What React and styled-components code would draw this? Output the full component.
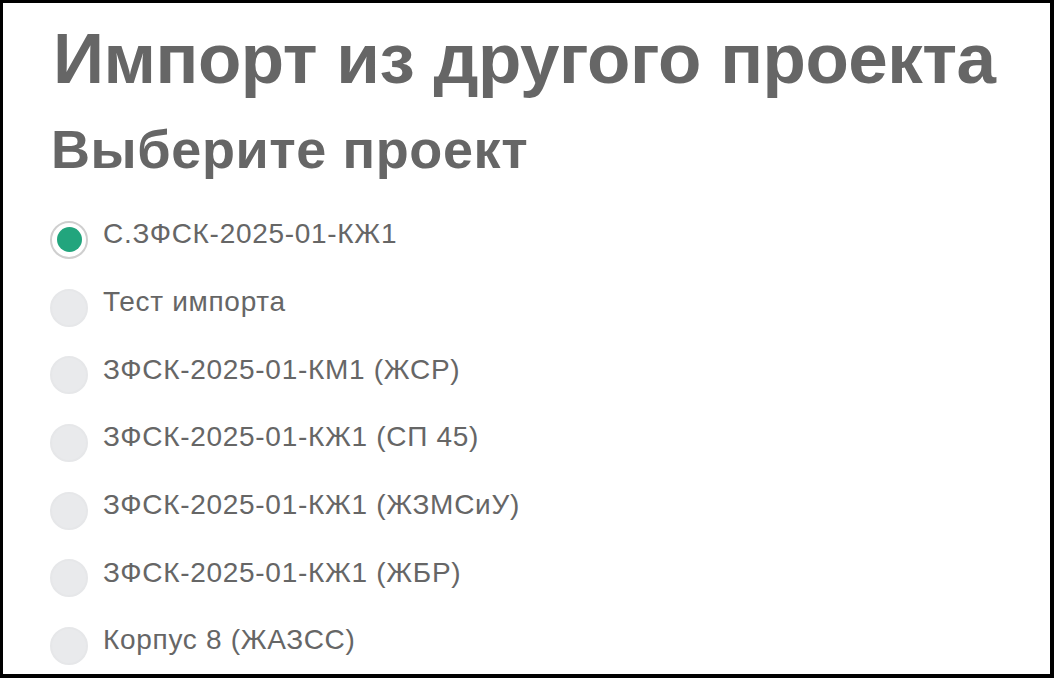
import React, { useState } from 'react'
import styled, { createGlobalStyle } from 'styled-components'

const GlobalStyle = createGlobalStyle`
    html, body {
        margin: 0;
        padding: 0;
        background: #000;
    }
    * {
        box-sizing: border-box;
    }
`;

const projects = [
    'С.ЗФСК-2025-01-КЖ1',
    'Тест импорта',
    'ЗФСК-2025-01-КМ1 (ЖСР)',
    'ЗФСК-2025-01-КЖ1 (СП 45)',
    'ЗФСК-2025-01-КЖ1 (ЖЗМСиУ)',
    'ЗФСК-2025-01-КЖ1 (ЖБР)',
    'Корпус 8 (ЖАЗСС)',
];

function App() {
    const [selected, setSelected] = useState(0);

    return (
        <Frame>
            <GlobalStyle />
            <Title>Импорт из другого проекта</Title>
            <Subtitle>Выберите проект</Subtitle>
            <ProjectList>
                {projects.map((name, i) => (
                    <ProjectRow key={name} onClick={() => setSelected(i)}>
                        <Radio $checked={selected === i} />
                        <Label>{name}</Label>
                    </ProjectRow>
                ))}
            </ProjectList>
        </Frame>
    )
}

const Frame = styled.div`
    width: 1054px;
    height: 678px;
    overflow: hidden;
    background: #fff;
    border: 3px solid #000;
    border-right-width: 4px;
    border-bottom-width: 4px;
    padding: 20px 0 0 44px;
    font-family: "Liberation Sans", Arial, sans-serif;
    color: #666;
`;

const Title = styled.h1`
    margin: 0 0 0 6px;
    font-size: 71px;
    line-height: 71px;
    font-weight: 700;
    letter-spacing: -0.5px;
    color: #666;
    white-space: nowrap;
`;

const Subtitle = styled.h2`
    margin: 28px 0 0 4px;
    font-size: 54px;
    line-height: 54px;
    font-weight: 700;
    letter-spacing: 0.6px;
    color: #666;
`;

const ProjectList = styled.div`
    margin-top: 30px;
    display: flex;
    flex-direction: column;
`;

const ProjectRow = styled.label`
    height: 67.7px;
    display: flex;
    align-items: center;
    gap: 15px;
    padding-left: 3px;
    cursor: pointer;
`;

const Radio = styled.span`
    width: 38px;
    height: 38px;
    flex-shrink: 0;
    border-radius: 50%;
    display: flex;
    align-items: center;
    justify-content: center;
    background: ${p => (p.$checked ? '#fff' : '#e9eaec')};
    border: 2px solid ${p => (p.$checked ? '#cfcfcf' : '#e6e7e9')};
    &::after {
        content: '';
        width: 25px;
        height: 25px;
        border-radius: 50%;
        background: #22a57d;
        display: ${p => (p.$checked ? 'block' : 'none')};
    }
`;

const Label = styled.span`
    font-size: 28px;
    line-height: 28px;
    letter-spacing: 0.7px;
    margin-top: -11px;
    color: #666;
    white-space: nowrap;
`;

export default App;
